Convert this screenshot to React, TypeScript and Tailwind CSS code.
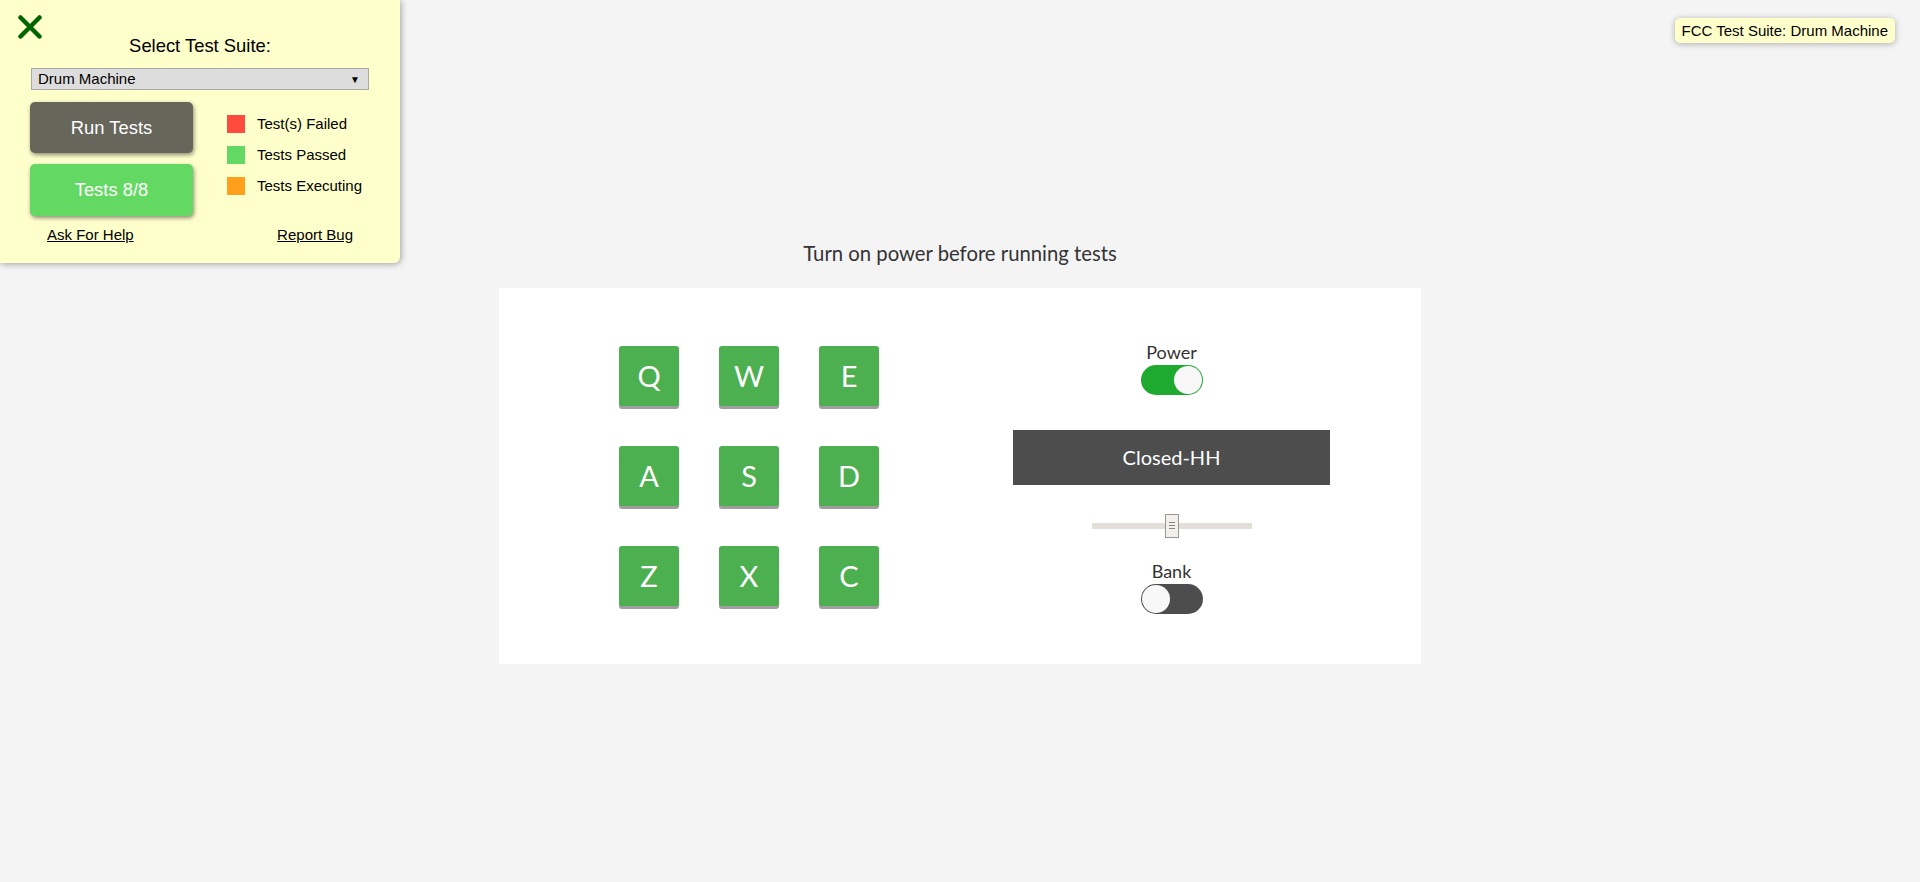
import React, { useState } from "react";

const pads = ["Q", "W", "E", "A", "S", "D", "Z", "X", "C"];

const Toggle: React.FC<{ on: boolean; onClick: () => void }> = ({ on, onClick }) => (
  <button
    onClick={onClick}
    className={
      "flex h-[30px] w-[62px] items-center rounded-full p-[1px] " +
      (on ? "justify-end bg-[#1eaa2e]" : "justify-start bg-[#4d4d4d]")
    }
  >
    <span className="block h-[28px] w-[28px] rounded-full bg-[#f8f8f8]" />
  </button>
);

const TestPanel: React.FC = () => {
  return (
    <div className="absolute left-0 top-0 flex h-[263px] w-[400px] flex-col rounded-br-[6px] bg-[#ffffcc] font-['Liberation_Sans',Arial,sans-serif] text-black shadow-[1px_1px_6px_rgba(0,0,0,0.35)]">
      <svg className="absolute left-[18px] top-[15px]" width="24" height="24" viewBox="0 0 24 24">
        <path d="M2.5 2.5 L21.5 21.5 M21.5 2.5 L2.5 21.5" stroke="#006400" strokeWidth="4.5" strokeLinecap="round" />
      </svg>
      <div className="pt-[35px] text-center text-[18.4px] leading-[22px]">Select Test Suite:</div>
      <div className="mx-[31px] mt-[11px] flex h-[22px] w-[338px] items-center justify-between border border-[#a9a9a9] bg-[#dddddd] pl-[6px] pr-[8px] text-[15px]">
        <span>Drum Machine</span>
        <span className="text-[10px]">▼</span>
      </div>
      <div className="mt-[12px] flex">
        <div className="ml-[30px] flex w-[163px] flex-col gap-[11px]">
          <button className="h-[51px] rounded-[5px] bg-[#67665b] text-[18.4px] text-white shadow-[1px_2px_4px_rgba(0,0,0,0.45)]">
            Run Tests
          </button>
          <button className="h-[52px] rounded-[5px] bg-[#63d863] text-[18.4px] text-white shadow-[1px_2px_4px_rgba(0,0,0,0.45)]">
            Tests 8/8
          </button>
        </div>
        <div className="ml-[34px] mt-[13px] flex flex-col gap-[13px] text-[15px]">
          {[
            ["bg-[#ff4b3e]", "Test(s) Failed"],
            ["bg-[#63d863]", "Tests Passed"],
            ["bg-[#ff9f1c]", "Tests Executing"],
          ].map(([c, t]) => (
            <div key={t} className="flex h-[18px] items-center gap-[12px]">
              <span className={"block h-[18px] w-[18px] " + c} />
              <span>{t}</span>
            </div>
          ))}
        </div>
      </div>
      <div className="mt-[10px] flex justify-between px-[47px] text-[15px] leading-[18px]">
        <a className="underline">Ask For Help</a>
        <a className="underline">Report Bug</a>
      </div>
    </div>
  );
};

const App: React.FC = () => {
  const [power, setPower] = useState(true);
  const [bank, setBank] = useState(false);

  return (
    <div className="relative min-h-[882px] w-full bg-[#f4f4f4] font-['Lato','Open_Sans',sans-serif] text-[#333]">
      <div className="flex flex-col items-center pt-[239px]">
        <p className="text-[20.3px] leading-[28px]">Turn on power before running tests</p>
        <div className="mt-[21px] flex h-[376px] w-[922px] items-center bg-white">
          <div className="ml-[120px] grid grid-cols-[repeat(3,60px)] gap-[40px]">
            {pads.map((k) => (
              <div
                key={k}
                className="flex h-[60px] w-[60px] items-center justify-center rounded-[3px] bg-[#4caf50] text-[29px] text-white shadow-[0_3px_0_#9e9e9e]"
              >
                {k}
              </div>
            ))}
          </div>
          <div className="ml-[134px] flex w-[317px] flex-col items-center">
            <div className="text-[18px] leading-[26px]">Power</div>
            <Toggle on={power} onClick={() => setPower(!power)} />
            <div className="mt-[35px] flex h-[55px] w-[317px] items-center justify-center bg-[#4d4d4d] text-[20px] text-white">
              Closed-HH
            </div>
            <div className="relative mt-[29px] flex h-[24px] w-[160px] items-center">
              <div className="h-[6px] w-full bg-[#e2ded8]" />
              <div className="absolute left-[73px] top-0 flex h-[24px] w-[14px] flex-col items-center justify-center gap-[2px] border border-[#9c968f] bg-[#f2f0ec]">
                <span className="block h-px w-[6px] bg-[#8a847d]" />
                <span className="block h-px w-[6px] bg-[#8a847d]" />
                <span className="block h-px w-[6px] bg-[#8a847d]" />
              </div>
            </div>
            <div className="mt-[20px] text-[18px] leading-[26px]">Bank</div>
            <Toggle on={bank} onClick={() => setBank(!bank)} />
          </div>
        </div>
      </div>

      <TestPanel />

      <div className="absolute right-[25px] top-[18px] h-[25px] rounded-[5px] bg-[#ffffcc] px-[7px] font-['Liberation_Sans',Arial,sans-serif] text-[15px] leading-[25px] text-black shadow-[0_1px_6px_rgba(0,0,0,0.3)]">
        FCC Test Suite: Drum Machine
      </div>
    </div>
  );
};

export default App;
